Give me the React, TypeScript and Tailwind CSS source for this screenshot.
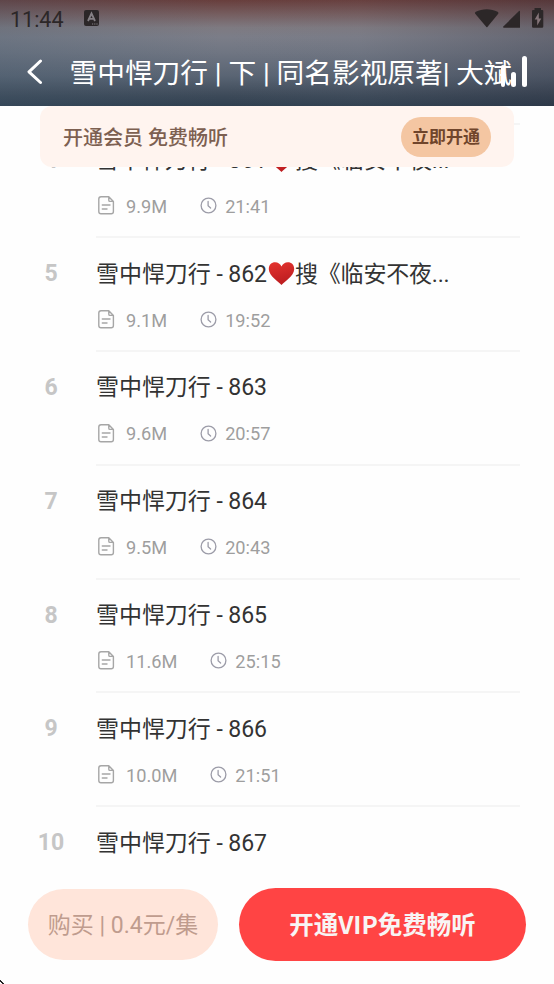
type Episode = {
  no: number;
  title: string;
  promo?: string;
  size?: string;
  duration?: string;
};

const episodes: Episode[] = [
  { no: 4, title: "雪中悍刀行 - 861", promo: "搜《临安不夜...", size: "9.9M", duration: "21:41" },
  { no: 5, title: "雪中悍刀行 - 862", promo: "搜《临安不夜...", size: "9.1M", duration: "19:52" },
  { no: 6, title: "雪中悍刀行 - 863", size: "9.6M", duration: "20:57" },
  { no: 7, title: "雪中悍刀行 - 864", size: "9.5M", duration: "20:43" },
  { no: 8, title: "雪中悍刀行 - 865", size: "11.6M", duration: "25:15" },
  { no: 9, title: "雪中悍刀行 - 866", size: "10.0M", duration: "21:51" },
  { no: 10, title: "雪中悍刀行 - 867" },
];

function HeartIcon() {
  return (
    <svg className="-mt-[2px] mr-[0.500px] ml-[0.500px] h-[23px] w-[27px] shrink-0" viewBox="0 0 27 23">
      <defs>
        <linearGradient id="heart" x1="0" y1="0" x2="0.3" y2="1">
          <stop offset="0" stopColor="#e5342f" />
          <stop offset="1" stopColor="#bd1d20" />
        </linearGradient>
      </defs>
      <path
        fill="url(#heart)"
        d="M13.5 23C11 19.8 1 14.500 .8 7.300C.7 2.800 3.600 .2 7.100 .2C10 .2 12.400 2 13.500 4.600C14.600 2 17 .2 19.900 .2C23.400 .2 26.300 2.800 26.200 7.300C26 14.500 16 19.800 13.500 23Z"
      />
    </svg>
  );
}

function FileIcon() {
  return (
    <svg className="h-[19px] w-[17px]" viewBox="0 0 17 19" fill="none" stroke="#a6a6a6" strokeWidth={1.4} strokeLinecap="round" strokeLinejoin="round">
      <path d="M10.800 .8H3C1.700 .8 .8 1.700 .8 3V15.600C.8 16.900 1.700 17.800 3 17.800H13.200C14.500 17.800 15.400 16.900 15.400 15.600V5.400L10.800 .8V4.200C10.800 4.900 11.300 5.400 12 5.400H15.400" />
      <path d="M4.300 9H12M4.300 13H9" />
    </svg>
  );
}

function ClockIcon() {
  return (
    <svg className="h-[17px] w-[17px]" viewBox="0 0 17 17" fill="none" stroke="#9c9ca8" strokeWidth={1.3} strokeLinecap="round" strokeLinejoin="round">
      <circle cx="8.500" cy="8.500" r="7.400" />
      <path d="M8.100 4.500V8.800L10.600 11" />
    </svg>
  );
}

function EpisodeRow({ episode }: { episode: Episode }) {
  return (
    <li className="flex h-[113.8px] shrink-0">
      <span className="w-[102px] shrink-0 pt-[19px] text-center text-[23px] leading-[34px] font-bold text-[#c6c6c6]">
        {episode.no}
      </span>
      <div className="-ml-[6px] flex w-[424px] flex-col pt-[19.500px]">
        <div className="flex h-[34px] items-center text-[23px] tracking-[-0.05px] whitespace-pre text-[#333333]">
          <span>{episode.title}</span>
          {episode.promo && (
            <>
              <HeartIcon />
              <span className="tracking-[-0.2px]">{episode.promo}</span>
            </>
          )}
        </div>
        {episode.size && (
          <div className="mt-[15.500px] flex h-[24px] items-center pl-[1.500px] text-[18.200px] text-[#9e9e9e]">
            <FileIcon />
            <span className="ml-[11.500px] pt-[2px]">{episode.size}</span>
            <span className="ml-[33px]">
              <ClockIcon />
            </span>
            <span className="ml-[8px] pt-[2px]">{episode.duration}</span>
          </div>
        )}
        <div className="mt-auto h-[2px] shrink-0 bg-[#f5f5f5]" />
      </div>
    </li>
  );
}

function StatusBar() {
  return (
    <div className="flex h-[38px] items-center justify-between pr-[10px] pl-[10px] text-[#2c2728]">
      <div className="flex items-center">
        <span className="pt-[1px] text-[21.500px] leading-none">11:44</span>
        <svg className="ml-[20px] h-[16px] w-[15px] -translate-y-px" viewBox="0 0 15 16">
          <rect width="15" height="16" rx="2" fill="currentColor" />
          <path d="M4 11L7.500 3.500L11 11M5.300 8.800H9.700" fill="none" stroke="#858085" strokeWidth="1.800" />
          <path d="M8 14H9.200M10.200 14H11.400M12.400 14H13.600" stroke="#858085" strokeWidth="1" />
        </svg>
      </div>
      <svg className="h-[21px] w-[70px] -translate-y-px" viewBox="474 8 70 21" fill="currentColor">
        <path d="M475.800 11.800C482 8.300 491.400 8.300 497.600 11.800Q499 12.800 498.200 13.800L487.400 27Q486.900 27.500 486.400 27L475.200 13.800Q474.400 12.800 475.800 11.800Z" />
        <path d="M503.600 27.800Q502.600 27.300 503.300 26.500L519 11Q520 10.500 520 11.600V27.800Z" />
        <path d="M534.500 8H541V10H542.300Q543.300 10 543.300 11V26.500Q543.300 27.800 542 27.800H533.300Q532 27.800 532 26.500V11Q532 10 533 10H534.500Z" />
        <path d="M538.800 12.500L534.700 19.500H537.200V25.500L541.300 18.500H538.800Z" fill="#857579" />
      </svg>
    </div>
  );
}

function Header() {
  return (
    <header className="relative h-[106px] shrink-0 bg-[linear-gradient(90deg,rgba(68,92,112,.25),rgba(70,80,95,0)_40%,rgba(100,100,115,.05)_65%,rgba(35,35,50,.25)),linear-gradient(180deg,#683e3c_0%,#765f61_14%,#7e7a81_26%,#7b7d88_35%,#6f7582_50%,#596473_72%,#3d4a59_90%,#304050_100%)]">
      <StatusBar />
      <div className="flex h-[68px] items-center">
        <svg className="ml-[26px] h-[26px] w-[18px] shrink-0" viewBox="0 0 18 26" fill="none" stroke="#ffffff" strokeWidth={3} strokeLinecap="round" strokeLinejoin="round">
          <path d="M14.500 2L3 12.800L14.500 23.500" />
        </svg>
        <h1 className="ml-[25.500px] pt-[3px] text-[27.700px] leading-[40px] font-normal whitespace-pre text-white">
          雪中悍刀行 | 下 | 同名影视原著| 大斌
        </h1>
      </div>
      {/* now playing indicator */}
      <div className="absolute top-[56px] left-[500.500px] flex h-[31px] items-end gap-[6px]">
        <span className="h-[22px] w-[4.500px] rounded-full bg-white" />
        <span className="h-[15px] w-[4.500px] rounded-full bg-white" />
        <span className="h-[31px] w-[5px] rounded-full bg-white" />
      </div>
    </header>
  );
}

export default function App() {
  return (
    <div className="relative flex h-[984px] w-[554px] flex-col overflow-hidden bg-[#fefefe] font-['Roboto','Noto_Sans_CJK_SC',sans-serif]">
      <Header />
      <main className="relative h-[762px] shrink-0 overflow-hidden">
        <div className="flex flex-col pt-[17px]">
          <div className="ml-[96px] h-[2px] w-[424px] shrink-0 bg-[#f5f5f5]" />
          <ul className="-mt-[0.500px] flex flex-col">
            {episodes.map((episode) => (
              <EpisodeRow key={episode.no} episode={episode} />
            ))}
          </ul>
        </div>
        {/* membership banner floats over the list */}
        <div className="absolute top-0 left-[40px] flex h-[61px] w-[474px] items-center justify-between rounded-[12px] bg-[#fff4ef] pr-[23px] pl-[23px]">
          <span className="pt-[2px] text-[20px] font-medium text-[#7d6051]">开通会员 免费畅听</span>
          <button className="h-[40px] w-[90px] rounded-full bg-[#f4c6a2] pt-[2px] text-[17px] font-bold text-[#70452b]">
            立即开通
          </button>
        </div>
      </main>
      <footer className="flex h-[116px] items-start bg-[#fefefe] pt-[20px] pl-[28px]">
        <button className="mt-px h-[71px] w-[190px] rounded-full bg-[#ffe5da] pt-[4px] text-[23px] whitespace-pre text-[#bf9c8e]">
          购买 | 0.4元/集
        </button>
        <button className="ml-[21px] h-[73px] w-[287px] rounded-full bg-[#ff4444] font-['Noto_Sans_CJK_SC',sans-serif] text-[24.500px] font-bold whitespace-pre text-[#f8f4f4]">
          开通VIP免费畅听
        </button>
      </footer>
      <svg className="absolute bottom-0 left-0 h-[4px] w-[4px]" viewBox="0 0 4 4" shapeRendering="crispEdges">
        <path d="M0 0H1V1H2V2H3V3H4V4H2V3H1V2H0Z" fill="#222222" />
      </svg>
    </div>
  );
}
